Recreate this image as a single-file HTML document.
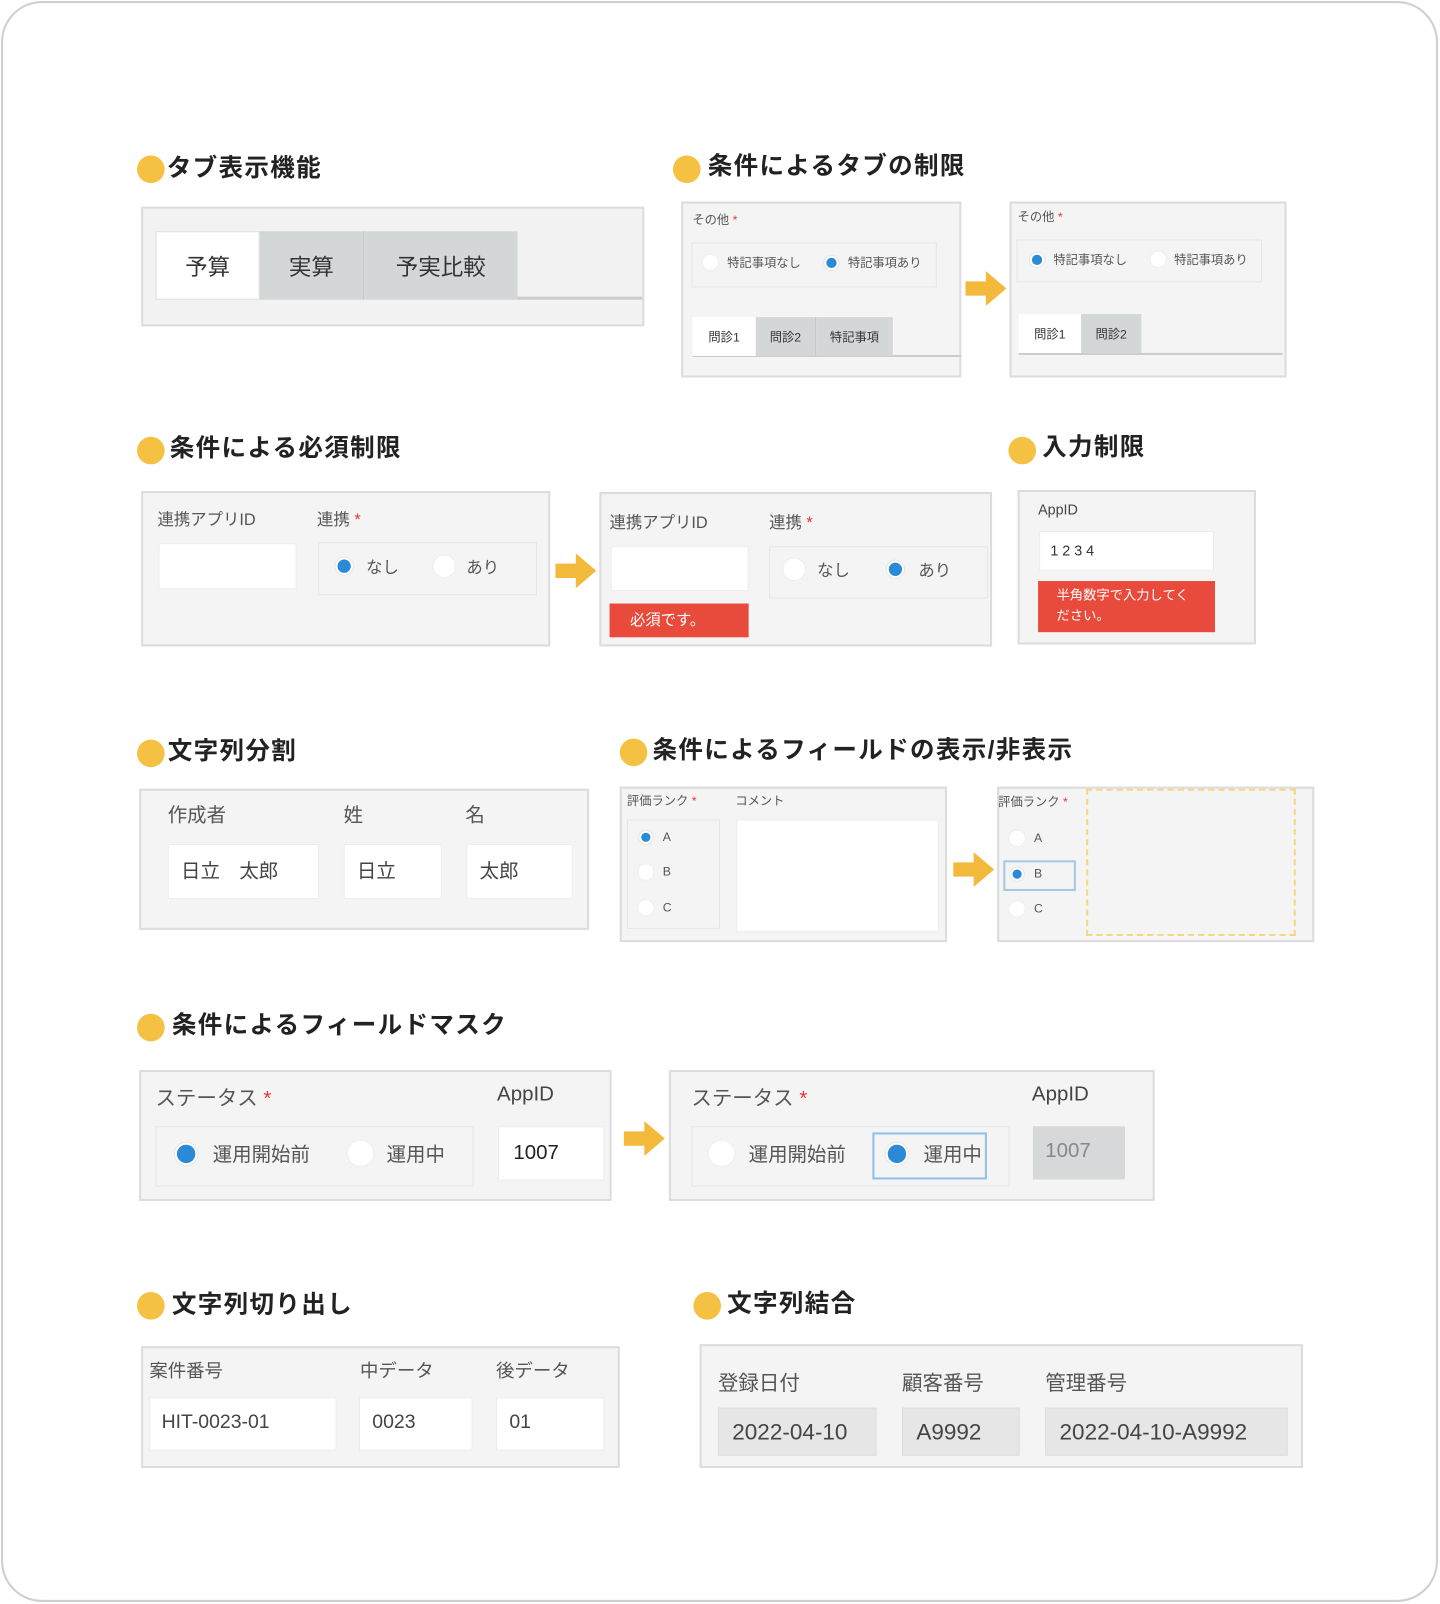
<!DOCTYPE html>
<html><head><meta charset="utf-8">
<style>
*{box-sizing:border-box;margin:0;padding:0}
html,body{width:1440px;height:1604px;overflow:hidden;background:#fff}
#w{position:absolute;left:0;top:0;width:1408px;height:1568px;transform:scale(1.02273,1.02296);transform-origin:0 0;font-family:"Liberation Sans","Noto Sans CJK JP",sans-serif;color:#333}
.a{position:absolute}
.frame{left:1px;top:1px;width:1405px;height:1565px;border:2px solid #cfcfcf;border-radius:40px}
.dot{position:absolute;width:27px;height:27px;border-radius:50%;background:#f4c143}
.h{position:absolute;font-size:24px;font-weight:bold;color:#222;white-space:nowrap;line-height:28px;letter-spacing:1.3px}
.p{position:absolute;background:#f4f4f4;border:2px solid #dcdcdc}
.in{position:absolute;background:#fff;border:1px solid #ececec}
.grp{position:absolute;border:1px solid #e6e6e6;background:#f4f4f4}
.t{position:absolute;white-space:nowrap;color:#555}
.r{position:absolute;border-radius:50%;background:#fff;border:1px solid #eee}
.rf{position:absolute;border-radius:50%;background:#2a8ad8;border:2px solid #fff;box-shadow:0 0 0 1px #e6e6e6}
.st{color:#e33}
.tab{position:absolute;display:flex;align-items:center;justify-content:center;color:#333}
.gray{background:#d4d7d8}
.white{background:#fff}
.err{position:absolute;background:#e84a3b;color:#fff}
</style></head><body><div id="w">
<div class="a frame"></div>
<svg width="0" height="0" style="position:absolute"><defs><symbol id="arr" viewBox="0 0 40 34"><polygon points="0,10 20,10 20,0 40,17 20,34 20,24 0,24" fill="#f2b93b"/></symbol></defs></svg>

<div class="dot" style="left:134px;top:152px"></div><div class="h" style="left:163px;top:151px">タブ表示機能</div>
<div class="p" style="left:138px;top:202px;width:492px;height:117px;background:#f2f2f2"></div>
<div class="a" style="left:506px;top:290px;width:122px;height:3px;background:#ccc"></div>
<div class="tab white" style="left:152px;top:226px;width:102px;height:67px;font-size:22px;border:1px solid #ddd">予算</div>
<div class="tab gray" style="left:254px;top:226px;width:102px;height:67px;font-size:22px;border-right:1px solid #c5c8c9">実算</div>
<div class="tab gray" style="left:356px;top:226px;width:150px;height:67px;font-size:22px">予実比較</div>

<div class="dot" style="left:658px;top:152px"></div><div class="h" style="left:692px;top:149px">条件によるタブの制限</div>
<div class="p" style="left:666px;top:197px;width:274px;height:172px"></div>
<div class="t" style="left:677px;top:206px;font-size:12px">その他 <span class="st">*</span></div>
<div class="grp" style="left:676px;top:237px;width:240px;height:44px"></div>
<div class="r" style="left:686px;top:248px;width:17px;height:17px"></div><div class="t" style="left:711px;top:248px;font-size:12px">特記事項なし</div>
<div class="rf" style="left:806px;top:250px;width:14px;height:14px"></div><div class="t" style="left:829px;top:248px;font-size:12px">特記事項あり</div>
<div class="a" style="left:677px;top:347px;width:263px;height:2px;background:#ccc"></div>
<div class="tab white" style="left:677px;top:310px;width:62px;height:38px;font-size:12px">問診1</div>
<div class="tab gray" style="left:739px;top:310px;width:59px;height:38px;font-size:12px;border-right:1px solid #c5c8c9">問診2</div>
<div class="tab gray" style="left:798px;top:310px;width:75px;height:38px;font-size:12px">特記事項</div>
<svg class="a" style="left:944px;top:265px" width="40" height="34"><use href="#arr"/></svg>
<div class="p" style="left:987px;top:197px;width:271px;height:172px"></div>
<div class="t" style="left:995px;top:203px;font-size:12px">その他 <span class="st">*</span></div>
<div class="grp" style="left:994px;top:234px;width:240px;height:42px"></div>
<div class="rf" style="left:1007px;top:247px;width:14px;height:14px"></div><div class="t" style="left:1030px;top:245px;font-size:12px">特記事項なし</div>
<div class="r" style="left:1124px;top:245px;width:17px;height:17px"></div><div class="t" style="left:1148px;top:245px;font-size:12px">特記事項あり</div>
<div class="a" style="left:996px;top:345px;width:258px;height:2px;background:#ccc"></div>
<div class="tab white" style="left:996px;top:307px;width:61px;height:38px;font-size:12px">問診1</div>
<div class="tab gray" style="left:1057px;top:307px;width:59px;height:38px;font-size:12px">問診2</div>

<div class="dot" style="left:134px;top:427px"></div><div class="h" style="left:166px;top:425px">条件による必須制限</div>
<div class="p" style="left:138px;top:480px;width:400px;height:152px"></div>
<div class="t" style="left:154px;top:494px;font-size:16px">連携アプリID</div>
<div class="t" style="left:310px;top:494px;font-size:16px">連携 <span class="st">*</span></div>
<div class="in" style="left:155px;top:531px;width:135px;height:45px"></div>
<div class="grp" style="left:311px;top:530px;width:214px;height:52px"></div>
<div class="rf" style="left:328px;top:545px;width:17px;height:17px"></div><div class="t" style="left:358px;top:541px;font-size:16px">なし</div>
<div class="r" style="left:423px;top:542px;width:23px;height:23px"></div><div class="t" style="left:456px;top:541px;font-size:16px">あり</div>
<svg class="a" style="left:543px;top:541px" width="40" height="34"><use href="#arr"/></svg>
<div class="p" style="left:586px;top:481px;width:384px;height:151px"></div>
<div class="t" style="left:596px;top:497px;font-size:16px">連携アプリID</div>
<div class="t" style="left:752px;top:497px;font-size:16px">連携 <span class="st">*</span></div>
<div class="in" style="left:597px;top:534px;width:135px;height:44px"></div>
<div class="err" style="left:596px;top:590px;width:136px;height:33px;font-size:15px;padding:5px 0 0 20px">必須です。</div>
<div class="grp" style="left:752px;top:534px;width:214px;height:51px"></div>
<div class="r" style="left:765px;top:545px;width:23px;height:23px"></div><div class="t" style="left:799px;top:544px;font-size:16px">なし</div>
<div class="rf" style="left:867px;top:548px;width:17px;height:17px"></div><div class="t" style="left:898px;top:544px;font-size:16px">あり</div>

<div class="dot" style="left:986px;top:427px"></div><div class="h" style="left:1019px;top:424px">入力制限</div>
<div class="p" style="left:995px;top:479px;width:233px;height:151px"></div>
<div class="t" style="left:1015px;top:490px;font-size:14px;color:#444">AppID</div>
<div class="in" style="left:1016px;top:519px;width:171px;height:39px;font-size:14px;padding:10px 0 0 10px;color:#333">1 2 3 4</div>
<div class="err" style="left:1015px;top:568px;width:173px;height:50px;font-size:13px;padding:4px 0 0 18px;line-height:20px">半角数字で入力してく<br>ださい。</div>

<div class="dot" style="left:134px;top:723px"></div><div class="h" style="left:164px;top:721px">文字列分割</div>
<div class="p" style="left:136px;top:771px;width:440px;height:138px"></div>
<div class="t" style="left:164px;top:782px;font-size:19px">作成者</div>
<div class="t" style="left:336px;top:782px;font-size:19px">姓</div>
<div class="t" style="left:455px;top:782px;font-size:19px">名</div>
<div class="in" style="left:164px;top:825px;width:148px;height:54px;font-size:19px;padding:11px 0 0 12px;color:#444">日立　太郎</div>
<div class="in" style="left:336px;top:825px;width:96px;height:54px;font-size:19px;padding:11px 0 0 12px;color:#444">日立</div>
<div class="in" style="left:456px;top:825px;width:104px;height:54px;font-size:19px;padding:11px 0 0 12px;color:#444">太郎</div>

<div class="dot" style="left:606px;top:722px"></div><div class="h" style="left:638px;top:720px">条件によるフィールドの表示/非表示</div>
<div class="p" style="left:606px;top:769px;width:320px;height:152px"></div>
<div class="t" style="left:613px;top:774px;font-size:12px">評価ランク <span class="st">*</span></div>
<div class="t" style="left:719px;top:774px;font-size:12px">コメント</div>
<div class="grp" style="left:613px;top:801px;width:91px;height:107px"></div>
<div class="rf" style="left:625px;top:812px;width:13px;height:13px"></div><div class="t" style="left:648px;top:811px;font-size:12px">A</div>
<div class="r" style="left:623px;top:844px;width:17px;height:17px"></div><div class="t" style="left:648px;top:845px;font-size:12px">B</div>
<div class="r" style="left:623px;top:879px;width:17px;height:17px"></div><div class="t" style="left:648px;top:880px;font-size:12px">C</div>
<div class="in" style="left:720px;top:801px;width:198px;height:110px"></div>
<svg class="a" style="left:932px;top:833px" width="40" height="34"><use href="#arr"/></svg>
<div class="p" style="left:975px;top:769px;width:310px;height:152px"></div>
<div class="t" style="left:976px;top:775px;font-size:12px">評価ランク <span class="st">*</span></div>
<div class="r" style="left:986px;top:811px;width:17px;height:17px"></div><div class="t" style="left:1011px;top:812px;font-size:12px">A</div>
<div class="a" style="left:981px;top:841px;width:71px;height:30px;border:2px solid #a9c7e3"></div>
<div class="rf" style="left:988px;top:848px;width:13px;height:13px"></div><div class="t" style="left:1011px;top:847px;font-size:12px">B</div>
<div class="r" style="left:986px;top:880px;width:17px;height:17px"></div><div class="t" style="left:1011px;top:881px;font-size:12px">C</div>
<div class="a" style="left:1062px;top:771px;width:205px;height:144px;border:2px dashed #f6d77f"></div>

<div class="dot" style="left:134px;top:991px"></div><div class="h" style="left:168px;top:989px">条件によるフィールドマスク</div>
<div class="p" style="left:136px;top:1046px;width:462px;height:128px"></div>
<div class="t" style="left:152px;top:1057px;font-size:20px">ステータス <span class="st">*</span></div>
<div class="t" style="left:486px;top:1059px;font-size:20px;color:#444">AppID</div>
<div class="grp" style="left:152px;top:1101px;width:311px;height:59px"></div>
<div class="rf" style="left:171px;top:1117px;width:22px;height:22px"></div><div class="t" style="left:208px;top:1114px;font-size:19px">運用開始前</div>
<div class="r" style="left:339px;top:1114px;width:27px;height:27px"></div><div class="t" style="left:378px;top:1114px;font-size:19px">運用中</div>
<div class="in" style="left:487px;top:1101px;width:104px;height:53px;font-size:20px;padding:14px 0 0 14px;color:#222">1007</div>
<svg class="a" style="left:609px;top:1096px" width="42" height="34"><use href="#arr"/></svg>
<div class="p" style="left:654px;top:1046px;width:475px;height:128px"></div>
<div class="t" style="left:676px;top:1057px;font-size:20px">ステータス <span class="st">*</span></div>
<div class="t" style="left:1009px;top:1059px;font-size:20px;color:#444">AppID</div>
<div class="grp" style="left:676px;top:1101px;width:311px;height:59px"></div>
<div class="r" style="left:692px;top:1114px;width:27px;height:27px"></div><div class="t" style="left:732px;top:1114px;font-size:19px">運用開始前</div>
<div class="a" style="left:853px;top:1107px;width:112px;height:46px;border:2px solid #8fc1e6;background:#f4f4f4"></div>
<div class="rf" style="left:866px;top:1117px;width:22px;height:22px"></div><div class="t" style="left:903px;top:1114px;font-size:19px">運用中</div>
<div class="a" style="left:1010px;top:1101px;width:90px;height:52px;background:#d6d8d9;font-size:20px;padding:13px 0 0 12px;color:#888">1007</div>

<div class="dot" style="left:134px;top:1263px"></div><div class="h" style="left:168px;top:1262px">文字列切り出し</div>
<div class="p" style="left:138px;top:1316px;width:468px;height:119px"></div>
<div class="t" style="left:146px;top:1326px;font-size:18px">案件番号</div>
<div class="t" style="left:352px;top:1326px;font-size:18px">中データ</div>
<div class="t" style="left:485px;top:1326px;font-size:18px">後データ</div>
<div class="in" style="left:146px;top:1366px;width:183px;height:52px;font-size:19px;padding:13px 0 0 11px;color:#444">HIT-0023-01</div>
<div class="in" style="left:351px;top:1366px;width:111px;height:52px;font-size:19px;padding:13px 0 0 12px;color:#444">0023</div>
<div class="in" style="left:485px;top:1366px;width:106px;height:52px;font-size:19px;padding:13px 0 0 12px;color:#444">01</div>

<div class="dot" style="left:678px;top:1263px"></div><div class="h" style="left:711px;top:1261px">文字列結合</div>
<div class="p" style="left:684px;top:1314px;width:590px;height:121px"></div>
<div class="t" style="left:702px;top:1336px;font-size:20px">登録日付</div>
<div class="t" style="left:882px;top:1336px;font-size:20px">顧客番号</div>
<div class="t" style="left:1022px;top:1336px;font-size:20px">管理番号</div>
<div class="a" style="left:702px;top:1376px;width:155px;height:47px;background:#e6e6e6;border:1px solid #ddd;font-size:22px;padding:10px 0 0 13px;color:#444">2022-04-10</div>
<div class="a" style="left:882px;top:1376px;width:115px;height:47px;background:#e6e6e6;border:1px solid #ddd;font-size:22px;padding:10px 0 0 13px;color:#444">A9992</div>
<div class="a" style="left:1022px;top:1376px;width:237px;height:47px;background:#e6e6e6;border:1px solid #ddd;font-size:22px;padding:10px 0 0 13px;color:#444">2022-04-10-A9992</div>
</div></body></html>
